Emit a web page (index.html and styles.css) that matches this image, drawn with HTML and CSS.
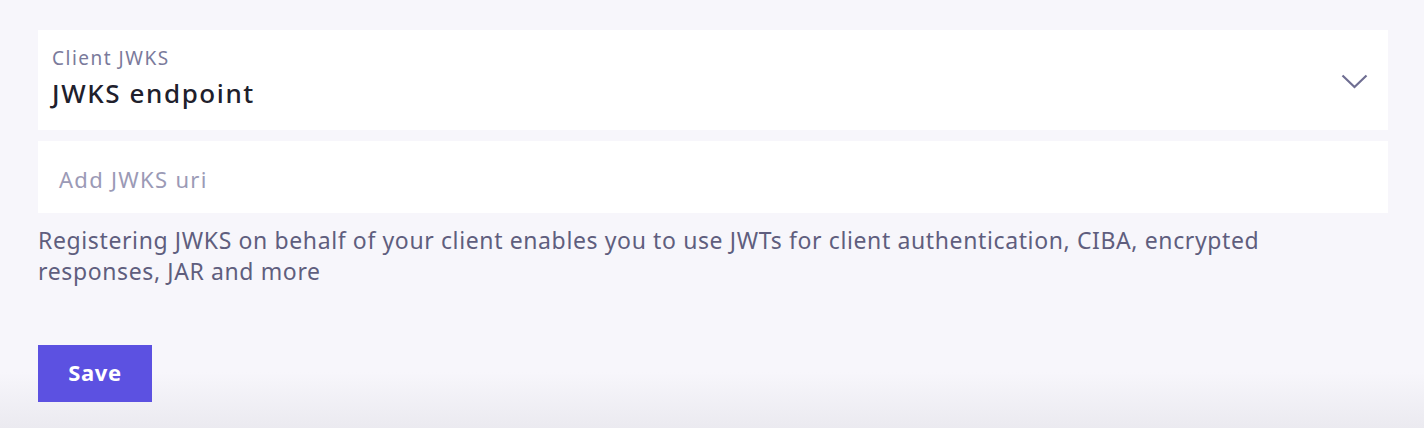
FILE: index.html
```html
<!DOCTYPE html>
<html>
<head>
<meta charset="utf-8">
<link rel="stylesheet" href="styles.css">
</head>
<body>
<div class="page">
  <div class="select">
    <div class="select-text">
      <div class="select-label">Client JWKS</div>
      <div class="select-value">JWKS endpoint</div>
    </div>
    <svg class="chevron" width="27" height="15" viewBox="0 0 27 15"><path d="M1.5 1.5 L13.5 13 L25.5 1.5" fill="none" stroke="#6f6e92" stroke-width="2.2"/></svg>
  </div>
  <div class="input">Add JWKS uri</div>
  <p class="help">Registering JWKS on behalf of your client enables you to use JWTs for client authentication, CIBA, encrypted responses, JAR and more</p>
  <div class="actions">
    <button class="save">Save</button>
  </div>
</div>
</body>
</html>
```
FILE: styles.css
```css
html, body {
  margin: 0;
  height: 100%;
}
body {
  background: linear-gradient(to bottom, #f7f6fb 0px, #f7f6fb 372px, #ebeaf0 428px);
  font-family: "Noto Sans", "Open Sans", sans-serif;
}
.page {
  padding: 30px 36px 0 38px;
  display: flex;
  flex-direction: column;
}
.select {
  background: #ffffff;
  height: 100px;
  display: flex;
  align-items: flex-start;
  justify-content: space-between;
  padding: 16px 20px 0 14px;
  box-sizing: border-box;
}
.select-text {
  display: flex;
  flex-direction: column;
}
.select-label {
  font-size: 19px;
  color: #7a7a9b;
  line-height: 24px;
  letter-spacing: 1.5px;
}
.select-value {
  font-size: 26px;
  color: #20202c;
  line-height: 34px;
  font-weight: 500;
  letter-spacing: 1.6px;
  margin-top: 6px;
}
.chevron {
  display: block;
  margin-top: 28px;
}
.input {
  margin-top: 11px;
  background: #ffffff;
  height: 72px;
  box-sizing: border-box;
  display: flex;
  align-items: center;
  padding: 4px 0 0 21px;
  font-size: 22px;
  line-height: 30px;
  letter-spacing: 1.3px;
  color: #9b9ab6;
}
.help {
  margin: 12px 0 0 0;
  font-size: 23px;
  line-height: 31px;
  letter-spacing: 0.62px;
  color: #5f5e7e;
  max-width: 1240px;
}
.actions {
  margin-top: 58px;
}
.save {
  display: block;
  width: 114px;
  height: 57px;
  background: #5c51e1;
  border: none;
  border-radius: 0;
  color: #ffffff;
  font-family: "Noto Sans", "Open Sans", sans-serif;
  font-size: 22px;
  line-height: 28px;
  font-weight: 700;
  letter-spacing: 0.6px;
  padding: 0 0 3px 0;
}
```
